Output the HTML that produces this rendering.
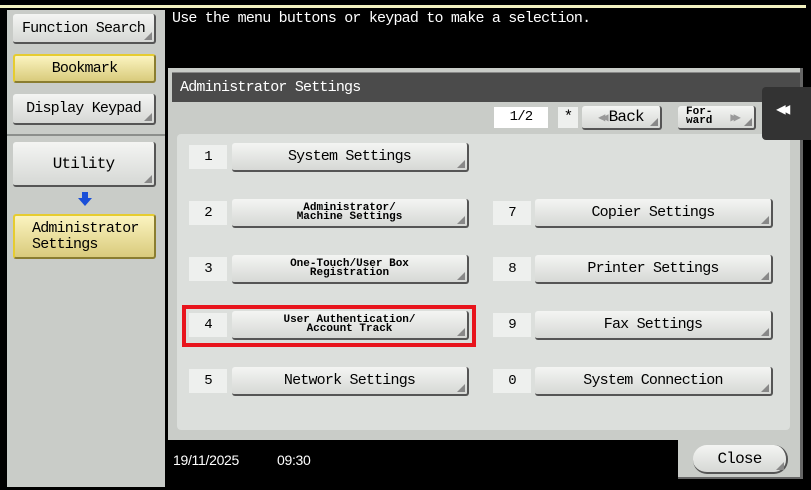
<!DOCTYPE html>
<html><head><meta charset="utf-8"><style>
*{margin:0;padding:0;box-sizing:border-box}
body{width:811px;height:490px;background:#000;position:relative;overflow:hidden;font-family:"Liberation Mono","DejaVu Sans Mono",monospace;color:#000;letter-spacing:-0.8px}
.a{position:absolute}
.btn{position:absolute;background:linear-gradient(#f4f5f3,#d6d8d5);border-right:2px solid #555;border-bottom:2px solid #555;border-radius:3px;display:flex;align-items:center;justify-content:center;text-align:center;font-size:15px}
.btn:after{content:"";position:absolute;right:2px;bottom:2px;width:0;height:0;border-left:8px solid transparent;border-bottom:8px solid #888}
.yel{background:linear-gradient(#fbf4c0,#d9cb7c);border:2px solid #e6cc30;border-right:2px solid #8a7d30;border-bottom:2px solid #8a7d30}
.yel:after{display:none}
.num{position:absolute;width:38px;height:24px;background:#eef0ee;font-size:14px;display:flex;align-items:center;justify-content:center}
.sm{font-size:11px;line-height:9px;font-weight:bold;letter-spacing:0}
</style></head><body>
<div class="a" style="left:0;top:5px;width:806px;height:3px;background:#f2f0c0"></div>
<div class="a" style="left:7px;top:10px;width:158px;height:477px;background:#c9ccc8"></div>
<div class="a" style="left:7px;top:134px;width:158px;height:2px;background:#8c8f8c"></div>
<div class="btn" style="left:13px;top:14px;width:143px;height:30px">Function Search</div>
<div class="btn yel" style="left:13px;top:54px;width:143px;height:29px">Bookmark</div>
<div class="btn" style="left:13px;top:94px;width:143px;height:31px">Display Keypad</div>
<div class="btn" style="left:13px;top:142px;width:143px;height:45px;font-size:16px">Utility</div>
<svg class="a" style="left:78px;top:192px" width="14" height="14"><path d="M4 0h6v6h4l-7 8-7-8h4z" fill="#1a4fd8"/></svg>
<div class="btn yel" style="left:13px;top:214px;width:143px;height:45px;justify-content:flex-start;padding-left:17px;text-align:left;line-height:16px;font-size:15px">Administrator<br>Settings</div>
<div class="a" style="left:172px;top:10px;color:#fff;font-size:15px">Use the menu buttons or keypad to make a selection.</div>
<div class="a" style="left:168px;top:68px;width:635px;height:372px;background:#c9ccc8;border-right:3px solid #666"></div>
<div class="a" style="left:172px;top:72px;width:628px;height:30px;background:#4b4b4b;border-top:1px solid #888;color:#fff;font-size:15px;padding:6px 0 0 8px">Administrator Settings</div>
<div class="a" style="left:177px;top:134px;width:613px;height:296px;background:#dcdfdc;border-radius:4px"></div>
<div class="a" style="left:494px;top:107px;width:54px;height:21px;background:#fff;font-size:14px;text-align:center;line-height:21px">1/2</div>
<div class="a" style="left:558px;top:107px;width:20px;height:21px;background:#eef0ee;font-size:16px;text-align:center;line-height:21px">*</div>
<div class="btn" style="left:582px;top:106px;width:80px;height:24px;font-size:16px"><span style="color:#999;font-size:12px;letter-spacing:-4px;margin-right:4px">◀◀</span>Back</div>
<div class="btn" style="left:678px;top:106px;width:78px;height:24px;justify-content:flex-start;padding-left:8px"><span class="sm">For-<br>ward</span><span style="color:#999;font-size:12px;margin-left:18px;letter-spacing:-4px">▶▶</span></div>
<div class="a" style="left:762px;top:87px;width:49px;height:53px;background:#333;border-radius:4px 0 0 4px;color:#fff;font-size:16px;padding:12px 0 0 14px;letter-spacing:-5px">◀◀</div>

<div class="num" style="left:189px;top:145px">1</div><div class="btn" style="left:232px;top:143px;width:237px;height:29px">System Settings</div>
<div class="num" style="left:189px;top:201px">2</div><div class="btn sm" style="left:232px;top:199px;width:237px;height:29px">Administrator/<br>Machine Settings</div>
<div class="num" style="left:189px;top:257px">3</div><div class="btn sm" style="left:232px;top:255px;width:237px;height:29px">One-Touch/User Box<br>Registration</div>
<div class="num" style="left:189px;top:313px">4</div><div class="btn sm" style="left:232px;top:311px;width:237px;height:29px">User Authentication/<br>Account Track</div>
<div class="num" style="left:189px;top:369px">5</div><div class="btn" style="left:232px;top:367px;width:237px;height:29px">Network Settings</div>
<div class="num" style="left:493px;top:201px">7</div><div class="btn" style="left:535px;top:199px;width:238px;height:29px">Copier Settings</div>
<div class="num" style="left:493px;top:257px">8</div><div class="btn" style="left:535px;top:255px;width:238px;height:29px">Printer Settings</div>
<div class="num" style="left:493px;top:313px">9</div><div class="btn" style="left:535px;top:311px;width:238px;height:29px">Fax Settings</div>
<div class="num" style="left:493px;top:369px">0</div><div class="btn" style="left:535px;top:367px;width:238px;height:29px">System Connection</div>
<div class="a" style="left:182px;top:305px;width:294px;height:42px;border:4px solid #e8141c"></div>

<div class="a" style="left:678px;top:438px;width:125px;height:41px;background:#c9ccc8;border-right:3px solid #666;border-bottom:2px solid #666"></div>
<div class="btn" style="left:693px;top:445px;width:95px;height:29px;border-radius:14px;font-size:16px">Close</div>
<div class="a" style="left:173px;top:452px;color:#fff;font-family:'Liberation Sans',sans-serif;font-size:14px;letter-spacing:-0.3px">19/11/2025</div>
<div class="a" style="left:277px;top:452px;color:#fff;font-family:'Liberation Sans',sans-serif;font-size:14px;letter-spacing:-0.3px">09:30</div>
</body></html>
